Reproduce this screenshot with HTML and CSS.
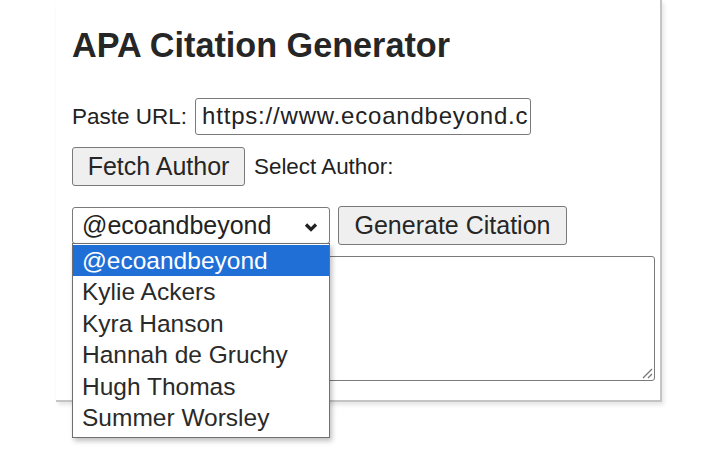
FILE: index.html
```html
<!DOCTYPE html>
<html>
<head>
<meta charset="utf-8">
<link rel="stylesheet" href="styles.css">
</head>
<body>
<div class="popup">
  <h1 class="title">APA Citation Generator</h1>
  <div class="row row-url">
    <span class="label label-url">Paste URL:</span>
    <div class="input">https://www.ecoandbeyond.c</div>
  </div>
  <div class="row row-fetch">
    <div class="btn btn-fetch">Fetch Author</div>
    <span class="label label-select">Select Author:</span>
  </div>
  <div class="row row-gen">
    <div class="select-wrap">
      <div class="select">
        <span class="select-text">@ecoandbeyond</span>
        <svg class="chev" width="14" height="10" viewBox="0 0 14 10"><path d="M2 2.5 L7 7.5 L12 2.5" fill="none" stroke="#222" stroke-width="3.2" stroke-linejoin="miter"/></svg>
      </div>
      <ul class="list">
        <li class="opt opt-sel">@ecoandbeyond</li>
        <li class="opt">Kylie Ackers</li>
        <li class="opt">Kyra Hanson</li>
        <li class="opt">Hannah de Gruchy</li>
        <li class="opt">Hugh Thomas</li>
        <li class="opt">Summer Worsley</li>
      </ul>
    </div>
    <div class="btn btn-gen">Generate Citation</div>
  </div>
  <div class="textarea">
    <svg class="grip" width="12" height="12" viewBox="0 0 12 12"><path d="M11 2 L2 11 M11 7 L7 11" stroke="#777" stroke-width="1.3" fill="none"/></svg>
  </div>
</div>
</body>
</html>
```

FILE: styles.css
```css
html, body {
  margin: 0;
  padding: 0;
  background: #fff;
}
body {
  font-family: "Liberation Sans", Arial, sans-serif;
  color: #222;
  width: 720px;
  height: 450px;
  overflow: hidden;
}
.popup {
  margin-left: 56px;
  width: 606px;
  height: 402px;
  padding: 25px 0 0 16px;
  box-sizing: border-box;
  border-right: 2px solid #c4c4c4;
  border-bottom: 2px solid #c4c4c4;
  box-shadow: 2px 3px 4px rgba(0,0,0,0.10);
  position: relative;
  background: #fff;
}
.title {
  margin: 0;
  font-size: 34.2px;
  line-height: 40px;
  font-weight: bold;
  color: #262626;
}
.row {
  display: flex;
  align-items: center;
}
.row-url {
  margin-top: 33px;
  gap: 8px;
}
.label-url {
  font-size: 22.5px;
}
.input {
  width: 336px;
  height: 37px;
  box-sizing: border-box;
  border: 1.5px solid #7a7a7a;
  border-radius: 3px;
  font-size: 24px;
  letter-spacing: 0.8px;
  line-height: 34px;
  padding-left: 6px;
  white-space: nowrap;
  overflow: hidden;
  color: #222;
}
.row-fetch {
  margin-top: 12px;
  gap: 9px;
}
.btn {
  box-sizing: border-box;
  height: 39px;
  border: 1.5px solid #7a7a7a;
  border-radius: 3px;
  background: #efefef;
  font-size: 25px;
  line-height: 36px;
  text-align: center;
  color: #262626;
}
.btn-fetch {
  width: 173px;
}
.label-select {
  font-size: 22.4px;
}
.row-gen {
  margin-top: 20px;
  gap: 8px;
  align-items: center;
}
.select-wrap {
  position: relative;
  width: 258px;
  height: 37px;
}
.select {
  box-sizing: border-box;
  width: 258px;
  height: 37px;
  border: 1.5px solid #7a7a7a;
  border-radius: 3px;
  display: flex;
  align-items: center;
  justify-content: space-between;
  padding: 0 11px 0 9px;
  font-size: 25px;
}
.chev {
  display: block;
  margin-top: 2px;
}
.list {
  position: absolute;
  left: 0;
  top: 36px;
  width: 258px;
  box-sizing: border-box;
  margin: 0;
  padding: 1px 0 4px;
  list-style: none;
  background: #fff;
  border: 1.5px solid #6f6f6f;
  box-shadow: 2px 3px 5px rgba(0,0,0,0.25);
  z-index: 5;
}
.opt {
  height: 31.4px;
  line-height: 31.4px;
  font-size: 24.5px;
  padding-left: 9px;
  color: #2a2a2a;
}
.opt-sel {
  background: #1f6fd6;
  color: #fff;
}
.btn-gen {
  width: 229px;
}
.textarea {
  margin-top: 11px;
  width: 583px;
  height: 125px;
  box-sizing: border-box;
  border: 1.5px solid #7a7a7a;
  border-radius: 3px;
  position: relative;
}
.grip {
  position: absolute;
  right: 1px;
  bottom: 1px;
}
```
